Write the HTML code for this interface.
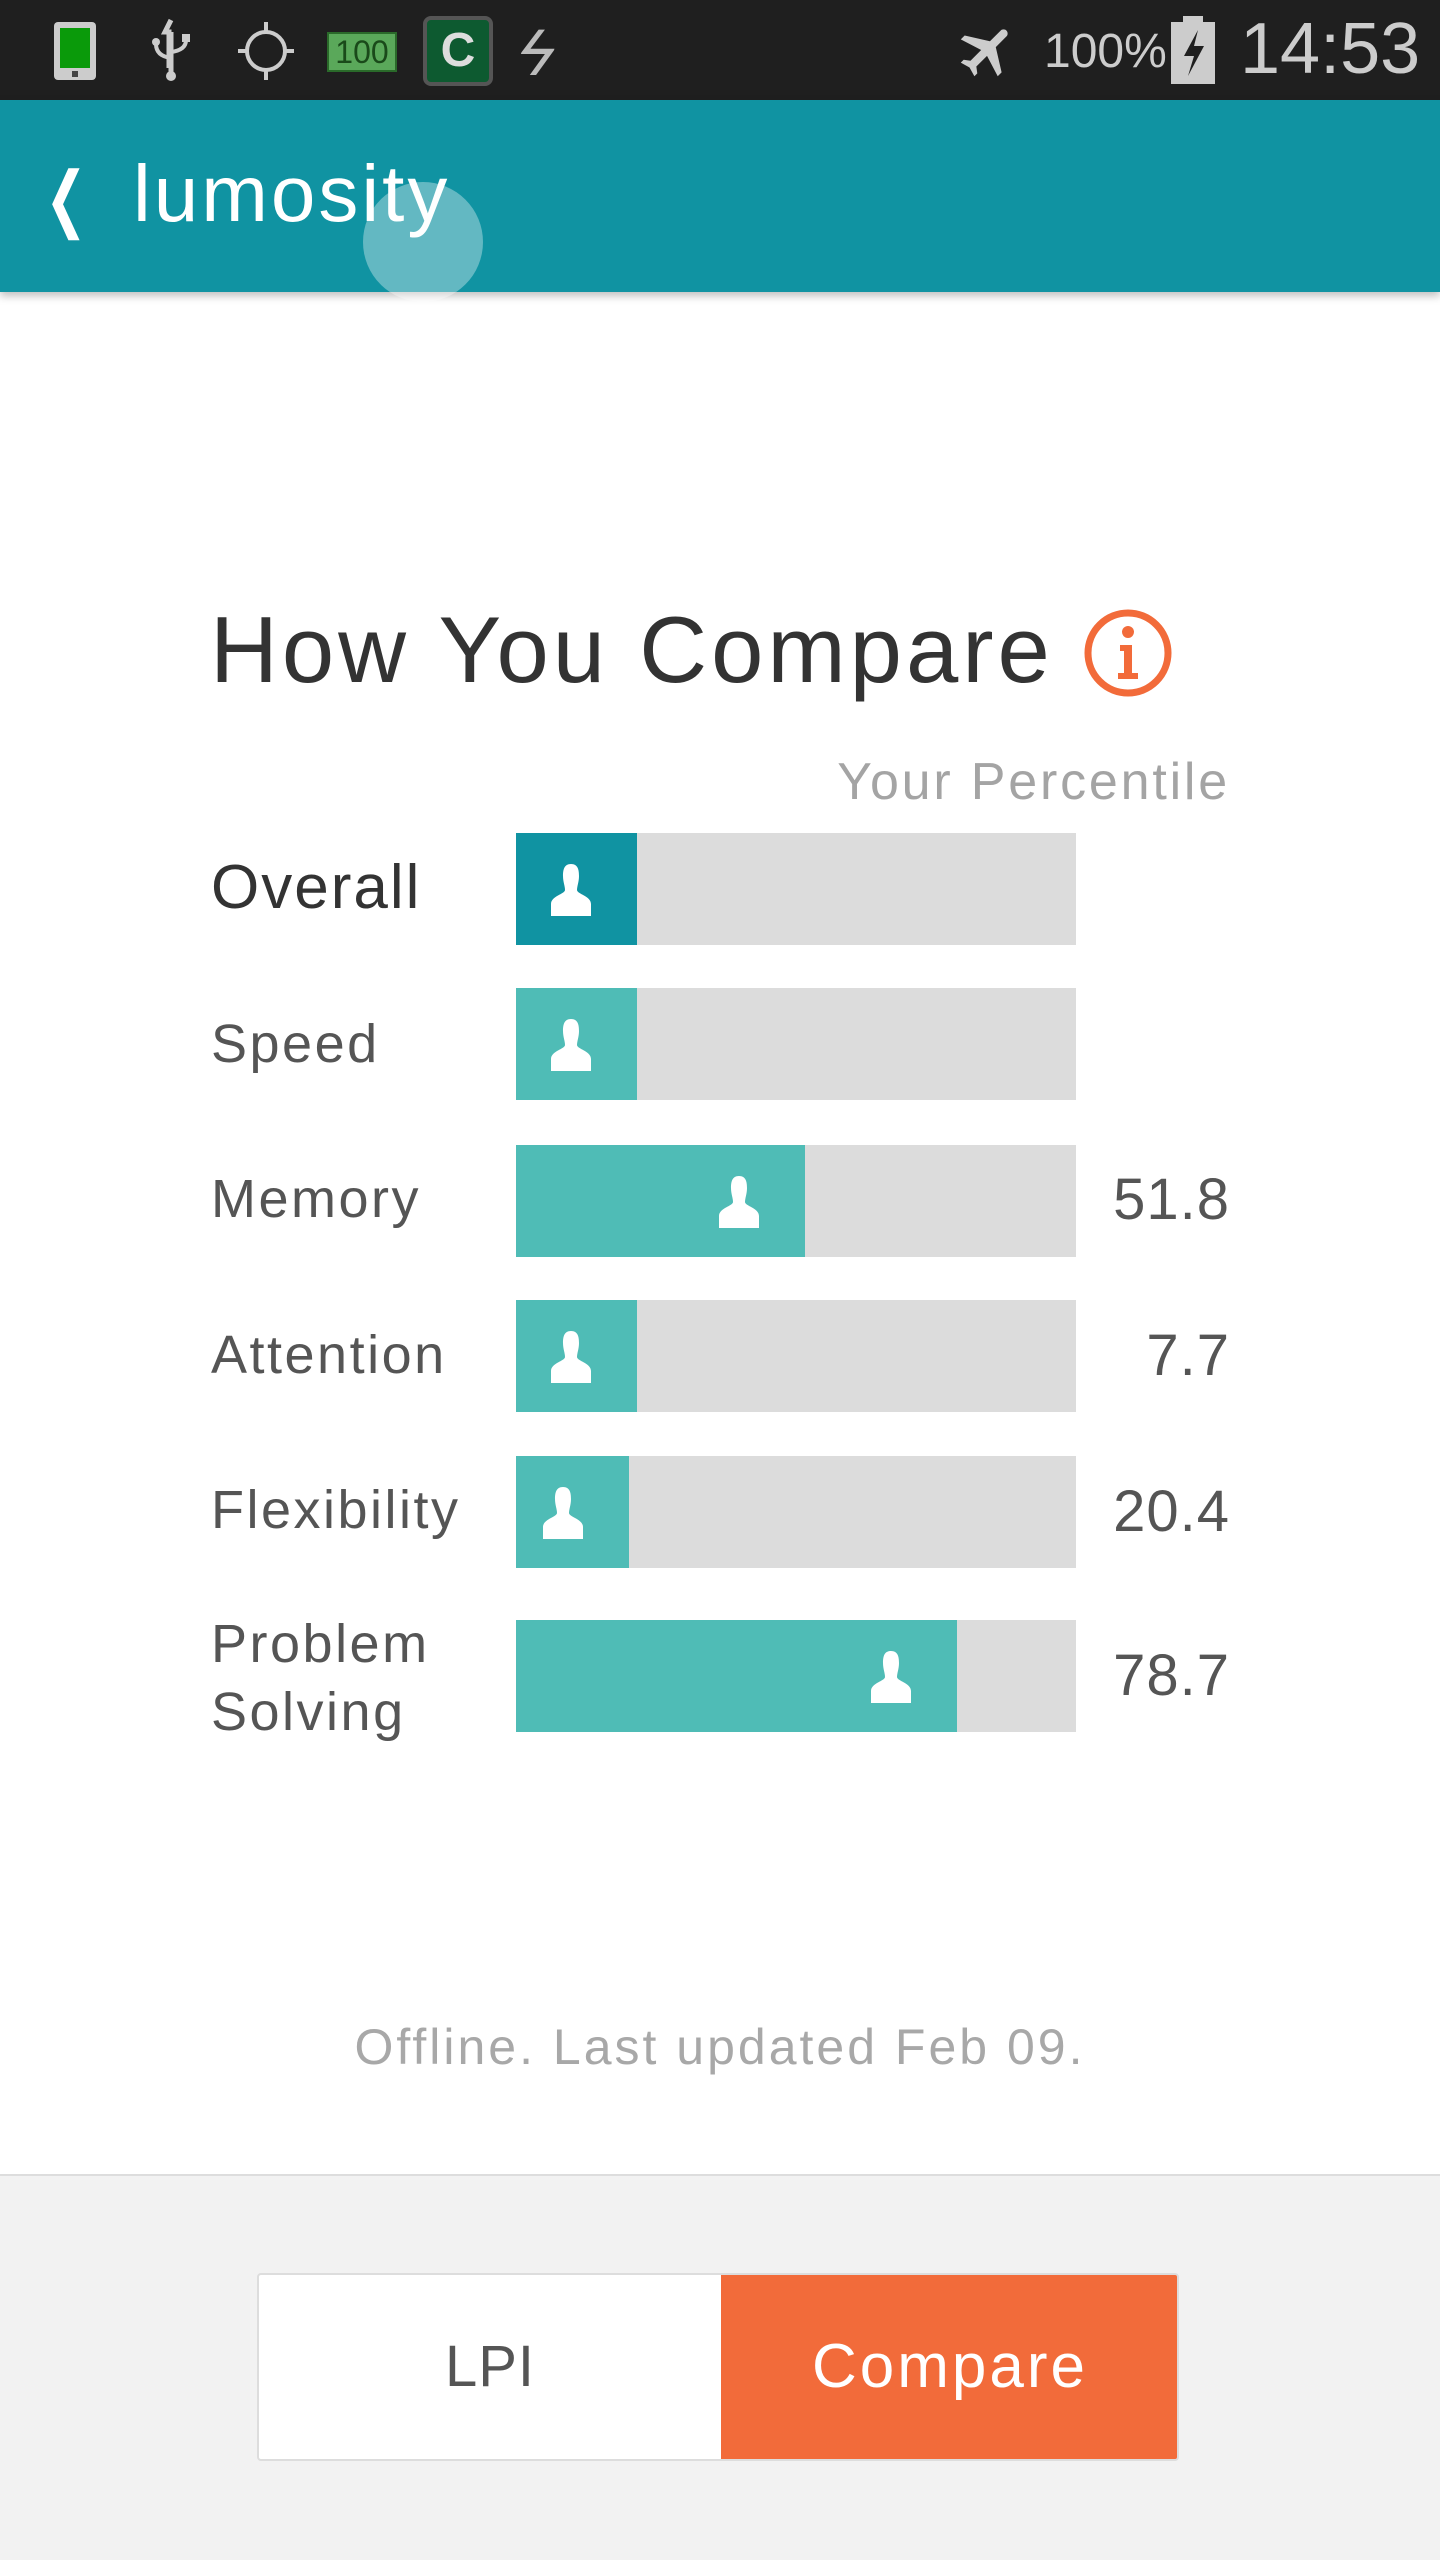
<!DOCTYPE html>
<html><head><meta charset="utf-8"><style>
*{margin:0;padding:0;box-sizing:border-box}
body{width:1440px;height:2560px;position:relative;background:#fff;font-family:"Liberation Sans",sans-serif;overflow:hidden}
.abs{position:absolute}
.status{left:0;top:0;width:1440px;height:100px;background:#1f1f1f}
.bar{left:0;top:100px;width:1440px;height:192px;background:#1093a2;box-shadow:0 4px 8px rgba(0,0,0,.25)}
.lbl{left:211px;color:#555;font-size:54px;white-space:nowrap;letter-spacing:2.5px}
.track{left:516px;width:560px;height:112px;background:#dcdcdc}
.fill{position:absolute;left:0;top:0;height:112px;background:#4fbcb6}
.fill svg{position:absolute;right:46px;top:31px}
.val{right:210px;color:#555;font-size:58px;text-align:right;letter-spacing:1px}
</style></head><body>
<div class="abs status">
  <svg class="abs" style="left:52px;top:20px" width="46" height="62" viewBox="0 0 46 62"><rect x="2" y="2" width="42" height="58" rx="4" fill="#ccc"/><rect x="8" y="8" width="30" height="40" fill="#0a9a0a"/><rect x="20" y="51" width="6" height="6" fill="#444"/></svg>
  <svg class="abs" style="left:146px;top:18px" width="50" height="66" viewBox="0 0 50 66"><path d="M25 2 L19 14 H23 V50 M25 14 V58" stroke="#ccc" stroke-width="5" fill="none"/><path d="M25 40 Q10 38 10 26 M25 34 Q40 32 40 22" stroke="#ccc" stroke-width="4" fill="none"/><circle cx="25" cy="58" r="5" fill="#ccc"/><circle cx="10" cy="24" r="4" fill="#ccc"/><rect x="36" y="16" width="8" height="8" fill="#ccc"/></svg>
  <svg class="abs" style="left:236px;top:20px" width="60" height="62" viewBox="0 0 60 62"><circle cx="30" cy="31" r="19" stroke="#ccc" stroke-width="4" fill="none"/><path d="M30 2V14M30 48V60M2 31H12M48 31H58" stroke="#ccc" stroke-width="4"/></svg>
  <div class="abs" style="left:327px;top:32px;width:70px;height:40px;background:#5aa85a;border:2px solid #2a6a2a;color:#1a4a1a;font-size:32px;line-height:36px;text-align:center">100</div>
  <div class="abs" style="left:423px;top:16px;width:70px;height:70px;border-radius:8px;background:#0d5a30;border:4px solid #555;color:#ddd;font-size:48px;font-weight:bold;text-align:center;line-height:62px">C</div>
  <div class="abs" style="left:520px;top:14px;color:#bbb;font-size:66px;transform:skewX(-20deg)">ϟ</div>
  <svg class="abs" style="left:955px;top:18px" width="66" height="66" viewBox="0 0 24 24"><path fill="#ccc" d="M21 16v-2l-8-5V3.5C13 2.7 12.3 2 11.5 2S10 2.7 10 3.5V9l-8 5v2l8-2.5V19l-2 1.5V22l3.5-1 3.5 1v-1.5L13 19v-5.5l8 2.5z" transform="rotate(45 12 12)"/></svg>
  <div class="abs" style="left:1044px;top:24px;color:#ccc;font-size:48px">100%</div>
  <svg class="abs" style="left:1168px;top:16px" width="50" height="68" viewBox="0 0 50 68"><rect x="15" y="0" width="20" height="8" fill="#ccc"/><rect x="3" y="6" width="44" height="62" fill="#ccc"/><path d="M30 14 L16 40 H26 L20 60 L36 30 H26 Z" fill="#1f1f1f"/></svg>
  <div class="abs" style="left:1240px;top:8px;color:#ccc;font-size:72px">14:53</div>
</div>
<div class="abs bar">
  <div class="abs" style="left:36px;top:56px;color:#fff;font-size:72px;transform:scaleX(.7)">❮</div>
  <div class="abs" style="left:133px;top:48px;color:#fff;font-size:80px;letter-spacing:3px">lumosity</div>
  <div class="abs" style="left:363px;top:82px;width:120px;height:120px;border-radius:50%;background:rgba(255,255,255,.35)"></div>
</div>
<div class="abs" style="left:210px;top:596px;color:#333;font-size:94px;white-space:nowrap;letter-spacing:4px">How You Compare</div>
<svg class="abs" style="left:1082px;top:607px" width="92" height="92" viewBox="0 0 92 92"><circle cx="46" cy="46" r="40" stroke="#f26b3a" stroke-width="7" fill="none"/><circle cx="46" cy="25" r="6" fill="#f26b3a"/><path d="M38 38H50V66H56V72H36V66H42V44H38Z" fill="#f26b3a"/></svg>
<div class="abs" style="right:210px;top:752px;color:#a4a4a4;font-size:52px;letter-spacing:2.8px">Your Percentile</div>

<div class="abs lbl" style="top:852px;color:#333;font-size:62px;letter-spacing:2px">Overall</div>
<div class="abs track" style="top:833px"><div class="fill" style="width:121px;background:#1093a2"><svg width="40" height="52" viewBox="0 0 40 52"><path d="M20 0C13 0 12 6 12 12C12 18 14 22 14 26C14 30 0 32 0 40V52H40V40C40 32 26 30 26 26C26 22 28 18 28 12C28 6 27 0 20 0Z" fill="#fff"/></svg></div></div>

<div class="abs lbl" style="top:1013px">Speed</div>
<div class="abs track" style="top:988px"><div class="fill" style="width:121px"><svg width="40" height="52" viewBox="0 0 40 52"><path d="M20 0C13 0 12 6 12 12C12 18 14 22 14 26C14 30 0 32 0 40V52H40V40C40 32 26 30 26 26C26 22 28 18 28 12C28 6 27 0 20 0Z" fill="#fff"/></svg></div></div>

<div class="abs lbl" style="top:1168px">Memory</div>
<div class="abs track" style="top:1145px"><div class="fill" style="width:289px"><svg width="40" height="52" viewBox="0 0 40 52"><path d="M20 0C13 0 12 6 12 12C12 18 14 22 14 26C14 30 0 32 0 40V52H40V40C40 32 26 30 26 26C26 22 28 18 28 12C28 6 27 0 20 0Z" fill="#fff"/></svg></div></div>
<div class="abs val" style="top:1166px">51.8</div>

<div class="abs lbl" style="top:1324px">Attention</div>
<div class="abs track" style="top:1300px"><div class="fill" style="width:121px"><svg width="40" height="52" viewBox="0 0 40 52"><path d="M20 0C13 0 12 6 12 12C12 18 14 22 14 26C14 30 0 32 0 40V52H40V40C40 32 26 30 26 26C26 22 28 18 28 12C28 6 27 0 20 0Z" fill="#fff"/></svg></div></div>
<div class="abs val" style="top:1322px">7.7</div>

<div class="abs lbl" style="top:1479px">Flexibility</div>
<div class="abs track" style="top:1456px"><div class="fill" style="width:113px"><svg width="40" height="52" viewBox="0 0 40 52"><path d="M20 0C13 0 12 6 12 12C12 18 14 22 14 26C14 30 0 32 0 40V52H40V40C40 32 26 30 26 26C26 22 28 18 28 12C28 6 27 0 20 0Z" fill="#fff"/></svg></div></div>
<div class="abs val" style="top:1478px">20.4</div>

<div class="abs lbl" style="top:1610px;line-height:68px">Problem<br>Solving</div>
<div class="abs track" style="top:1620px"><div class="fill" style="width:441px"><svg width="40" height="52" viewBox="0 0 40 52"><path d="M20 0C13 0 12 6 12 12C12 18 14 22 14 26C14 30 0 32 0 40V52H40V40C40 32 26 30 26 26C26 22 28 18 28 12C28 6 27 0 20 0Z" fill="#fff"/></svg></div></div>
<div class="abs val" style="top:1642px">78.7</div>

<div class="abs" style="left:0;width:1440px;top:2018px;text-align:center;color:#a8a8a8;font-size:50px;letter-spacing:3px">Offline. Last updated Feb 09.</div>

<div class="abs" style="left:0;top:2174px;width:1440px;height:386px;background:#f2f2f2;border-top:2px solid #ddd"></div>
<div class="abs" style="left:257px;top:2273px;width:922px;height:188px;border:2px solid #ddd;border-radius:4px;background:#fff;overflow:hidden">
  <div class="abs" style="left:0;top:0;width:462px;height:184px;text-align:center;line-height:184px;color:#555;font-size:58px;letter-spacing:1px">LPI</div>
  <div class="abs" style="left:462px;top:0;width:458px;height:184px;background:#f26b3a;text-align:center;line-height:184px;color:#fff;font-size:62px;letter-spacing:3px">Compare</div>
</div>
</body></html>
